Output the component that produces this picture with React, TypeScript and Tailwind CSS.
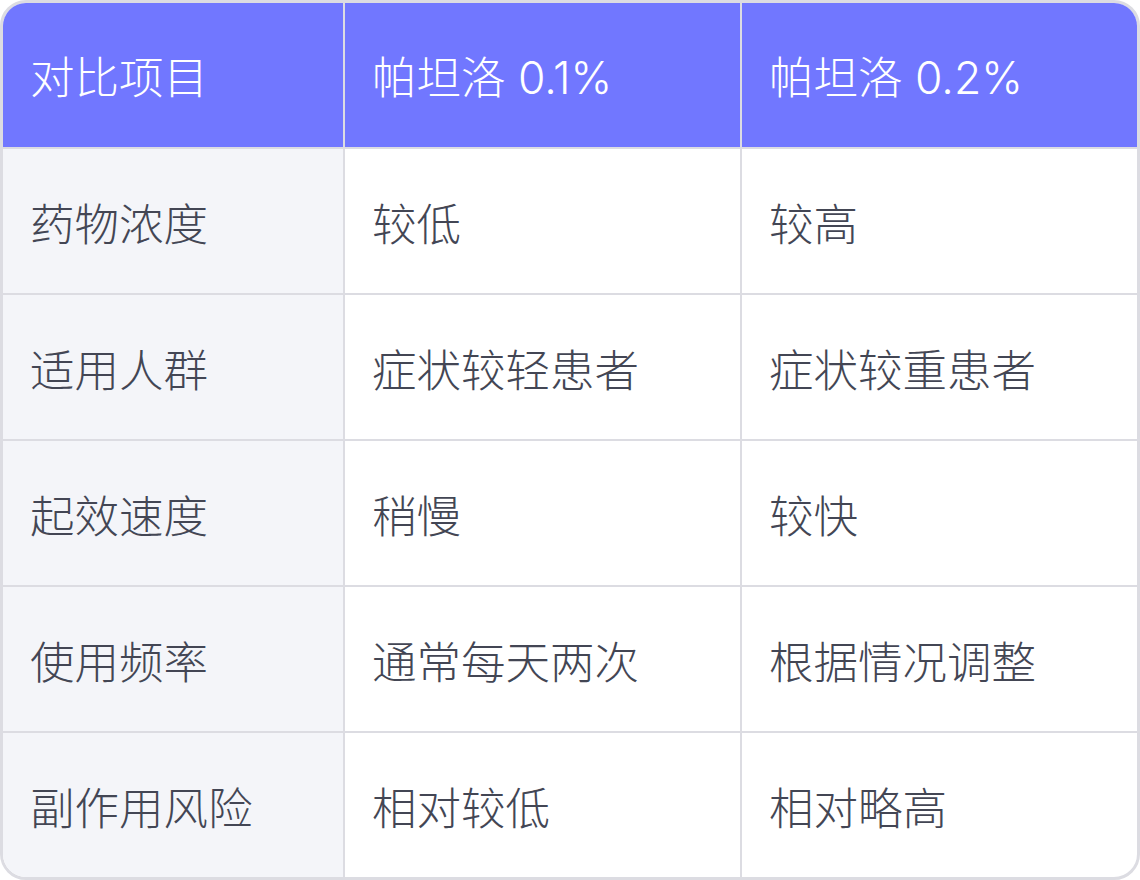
import React from "react";

const headers = ["对比项目", "帕坦洛 0.1%", "帕坦洛 0.2%"];

const rows: string[][] = [
  ["药物浓度", "较低", "较高"],
  ["适用人群", "症状较轻患者", "症状较重患者"],
  ["起效速度", "稍慢", "较快"],
  ["使用频率", "通常每天两次", "根据情况调整"],
  ["副作用风险", "相对较低", "相对略高"],
];

const font = {
  fontFamily: 'Inter, "Noto Sans CJK SC", sans-serif',
};

const App = () => {
  return (
    <div className="w-[1140px] h-[880px] bg-white" style={font}>
      <div className="w-full h-full border-[3px] border-[#dcdce2] rounded-[26px] overflow-hidden flex flex-col">
        <div className="flex h-[146px] bg-[#7177ff] border-b-2 border-[#dcdce2] text-white">
          {headers.map((h, i) => (
            <div
              key={h}
              className={
                i === 0
                  ? "w-[342px] flex items-center pl-[27px] pt-[7px] border-r-2 border-[#dcdce2]"
                  : i === 1
                  ? "w-[397px] flex items-center pl-[27px] pt-[7px] border-r-2 border-[#dcdce2]"
                  : "flex-1 flex items-center pl-[27px] pt-[7px]"
              }
            >
              <span className="text-[44.5px] font-light leading-none">{h}</span>
            </div>
          ))}
        </div>
        {rows.map((r, ri) => (
          <div
            key={r[0]}
            className={
              ri === rows.length - 1
                ? "flex h-[144px] text-[#434654]"
                : "flex h-[146px] border-b-2 border-[#dcdce2] text-[#434654]"
            }
          >
            <div className="w-[342px] flex items-center pl-[27px] pt-[8px] bg-[#f4f5f9] border-r-2 border-[#dcdce2]">
              <span className="text-[44.5px] font-light leading-none">{r[0]}</span>
            </div>
            <div className="w-[397px] flex items-center pl-[27px] pt-[8px] border-r-2 border-[#dcdce2]">
              <span className="text-[44.5px] font-light leading-none">{r[1]}</span>
            </div>
            <div className="flex-1 flex items-center pl-[27px] pt-[8px]">
              <span className="text-[44.5px] font-light leading-none">{r[2]}</span>
            </div>
          </div>
        ))}
      </div>
    </div>
  );
};

export default App;
